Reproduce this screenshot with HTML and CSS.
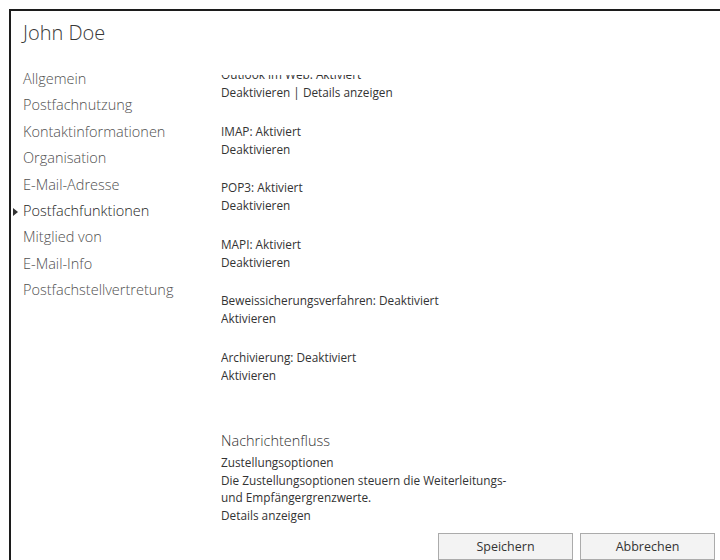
FILE: index.html
```html
<!DOCTYPE html>
<html lang="de">
<head>
<meta charset="utf-8">
<title>John Doe</title>
<link rel="stylesheet" href="styles.css">
</head>
<body>
<div class="window">
  <h1 class="title">John Doe</h1>
  <div class="main">
    <ul class="nav">
      <li>Allgemein</li>
      <li>Postfachnutzung</li>
      <li>Kontaktinformationen</li>
      <li>Organisation</li>
      <li>E-Mail-Adresse</li>
      <li class="active">Postfachfunktionen</li>
      <li>Mitglied von</li>
      <li>E-Mail-Info</li>
      <li>Postfachstellvertretung</li>
    </ul>
    <div class="pane">
      <div class="scroll">
        <div class="group">
          <div>Outlook im Web: Aktiviert</div>
          <div><a>Deaktivieren</a> | <a>Details anzeigen</a></div>
        </div>
        <div class="group">
          <div>IMAP: Aktiviert</div>
          <div><a>Deaktivieren</a></div>
        </div>
        <div class="group">
          <div>POP3: Aktiviert</div>
          <div><a>Deaktivieren</a></div>
        </div>
        <div class="group">
          <div>MAPI: Aktiviert</div>
          <div><a>Deaktivieren</a></div>
        </div>
        <div class="group">
          <div>Beweissicherungsverfahren: Deaktiviert</div>
          <div><a>Aktivieren</a></div>
        </div>
        <div class="group">
          <div>Archivierung: Deaktiviert</div>
          <div><a>Aktivieren</a></div>
        </div>
        <div class="section">
          <h2 class="section-title">Nachrichtenfluss</h2>
          <div>Zustellungsoptionen</div>
          <div>Die Zustellungsoptionen steuern die Weiterleitungs-<br>und Empfängergrenzwerte.</div>
          <div><a>Details anzeigen</a></div>
        </div>
      </div>
    </div>
  </div>
  <div class="footer">
    <button class="btn">Speichern</button>
    <button class="btn">Abbrechen</button>
  </div>
</div>
</body>
</html>
```

FILE: styles.css
```css
html, body {
  margin: 0;
  padding: 0;
  background: #ffffff;
  overflow: hidden;
}

body {
  font-family: "Open Sans", "Noto Sans", sans-serif;
  color: #333333;
}

.window {
  margin: 9px 0 0 9px;
  height: 560px;
  border-top: 2px solid #1c1c1c;
  border-left: 2px solid #1c1c1c;
  display: flex;
  flex-direction: column;
}

.title {
  margin: 0;
  box-sizing: border-box;
  padding: 8px 0 0 12px;
  height: 55px;
  font-size: 20px;
  font-weight: 300;
  color: #383838;
  line-height: 28px;
}

.main {
  display: flex;
  height: 460px;
  flex: none;
}

.nav {
  list-style: none;
  margin: 0;
  padding: 0 0 0 12px;
  width: 210px;
  flex: none;
  box-sizing: border-box;
  font-size: 14.5px;
  font-weight: 300;
  color: #505050;
}

.nav li {
  height: 26.4px;
  line-height: 26.4px;
  white-space: nowrap;
  position: relative;
}

.nav li.active {
  color: #1e1e1e;
}

.nav li.active::before {
  content: "";
  position: absolute;
  left: -10px;
  top: 10px;
  border-left: 5px solid #333333;
  border-top: 4px solid transparent;
  border-bottom: 4px solid transparent;
}

/* scrolled list of mailbox features; the first entry is partly scrolled away */
.pane {
  flex: 1;
  overflow: hidden;
  margin-top: 9px;
}

.scroll {
  margin-top: -10px;
  font-size: 11.8px;
  line-height: 18px;
}

.group {
  margin-bottom: 20.5px;
}

.group a,
.section a {
  color: #333333;
  text-decoration: none;
}

.section {
  margin-top: 46.5px;
  line-height: 17.7px;
}

.section-title {
  margin: 0 0 2px;
  font-size: 14.5px;
  font-weight: 300;
  line-height: 22px;
  color: #333333;
}

.footer {
  display: flex;
  justify-content: flex-end;
  gap: 7px;
  padding-right: 5px;
  margin-top: 7px;
}

.btn {
  width: 135px;
  height: 27px;
  border: 1px solid #ababab;
  background: #f3f3f3;
  font-family: "Open Sans", "Noto Sans", sans-serif;
  font-size: 12.5px;
  color: #333333;
  padding: 0;
}
```
